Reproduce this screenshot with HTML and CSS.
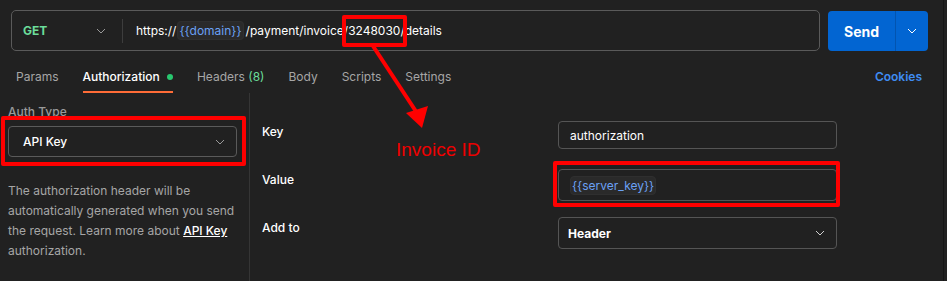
FILE: index.html
```html
<!DOCTYPE html>
<html>
<head>
<meta charset="utf-8">
<link rel="stylesheet" href="styles.css">
</head>
<body>
<div class="page">
  <div class="app">
    <div class="urlbar">
      <div class="urlbox">
        <div class="method">
          <span class="get">GET</span>
          <svg class="chev" width="10" height="6" viewBox="0 0 10 6"><path d="M1 1l4 4 4-4" fill="none" stroke="#9a9a9a" stroke-width="1"/></svg>
        </div>
        <div class="sep"></div>
        <div class="url"><span class="sp">https://</span><span class="var">{{domain}}</span><span class="sp2">/payment/invoice/3248030/details</span></div>
      </div>
      <div class="send">
        <span class="send-main">Send</span>
        <span class="send-drop"><svg width="10" height="6" viewBox="0 0 10 6"><path d="M1 1l4 4 4-4" fill="none" stroke="#ffffff" stroke-width="1"/></svg></span>
      </div>
    </div>
    <div class="tabs">
      <span class="tab">Params</span>
      <span class="tab active">Authorization <i class="dot"></i></span>
      <span class="tab">Headers <span class="count">(8)</span></span>
      <span class="tab">Body</span>
      <span class="tab">Scripts</span>
      <span class="tab">Settings</span>
      <span class="cookies">Cookies</span>
    </div>
    <div class="content">
      <div class="left">
        <div class="label">Auth Type</div>
        <div class="select">
          <span>API Key</span>
          <svg width="10" height="6" viewBox="0 0 10 6"><path d="M1 1l4 4 4-4" fill="none" stroke="#9a9a9a" stroke-width="1"/></svg>
        </div>
        <p class="desc">The authorization header will be automatically generated when you send the request. Learn more about <span class="link">API Key</span> authorization.</p>
      </div>
      <div class="right">
        <div class="row">
          <div class="key">Key</div>
          <div class="input short">authorization</div>
        </div>
        <div class="row">
          <div class="key">Value</div>
          <div class="input"><span class="var">{{server_key}}</span></div>
        </div>
        <div class="row">
          <div class="key">Add to</div>
          <div class="input dropdown"><span class="bold">Header</span><svg width="10" height="6" viewBox="0 0 10 6"><path d="M1 1l4 4 4-4" fill="none" stroke="#d0d0d0" stroke-width="1"/></svg></div>
        </div>
      </div>
    </div>
  </div>
  <div class="edge"></div>

  <div class="mark mark-url"></div>
  <div class="mark mark-auth"></div>
  <div class="mark mark-value"></div>
  <svg class="arrow" width="947" height="281" viewBox="0 0 947 281">
    <line x1="373" y1="46" x2="417" y2="113" stroke="#ff0000" stroke-width="4"/>
    <polygon points="406,113 428,106 422,128" fill="#ff0000"/>
  </svg>
  <div class="note">Invoice ID</div>
</div>
</body>
</html>
```

FILE: styles.css
```css
* { box-sizing: border-box; }
html, body { margin: 0; padding: 0; }
body {
  background: #212121;
  font-family: Inter, "Noto Sans", sans-serif;
  font-size: 12px;
  color: #ffffff;
}
.page {
  position: relative;
  width: 947px;
  height: 281px;
  display: flex;
  overflow: hidden;
}
.app {
  width: 943px;
  display: flex;
  flex-direction: column;
}
.edge {
  width: 4px;
  border-left: 1px solid #161616;
}
.urlbar {
  display: flex;
  gap: 8px;
  padding: 10px 15px 0 11px;
  height: 51px;
}
.urlbox {
  flex: 1;
  height: 41px;
  border: 1px solid #5a5a5a;
  border-radius: 5px;
  display: flex;
  align-items: center;
}
.method {
  width: 110px;
  padding: 0 16px 0 11px;
  display: flex;
  align-items: center;
  justify-content: space-between;
}
.get {
  color: #6bdd9a;
  font-weight: 700;
}
.sep {
  width: 1px;
  height: 24px;
  background: #3d3d3d;
}
.url {
  padding-left: 13px;
  white-space: pre;
  color: #ffffff;
  font-size: 12px;
}
.sp { margin-right: 1px; }
.sp2 { margin-left: 2px; }
.var {
  color: #6aa1f4;
  background: #2a2a2a;
  border: 1px solid #2f2f2f;
  border-radius: 4px;
  padding: 1px 1px;
}
.send {
  width: 100px;
  height: 40px;
  margin-top: 1px;
  background: #0265d2;
  border-radius: 4px;
  display: flex;
}
.send-main {
  width: 68px;
  display: flex;
  align-items: center;
  justify-content: center;
  font-weight: 700;
  font-size: 14px;
  border-right: 1px solid #0254b0;
}
.send-drop {
  flex: 1;
  display: flex;
  align-items: center;
  justify-content: center;
}
.tabs {
  height: 42px;
  display: flex;
  align-items: flex-end;
  gap: 24px;
  padding-left: 16px;
  padding-right: 21px;
}
.tab {
  color: #a6a6a6;
  line-height: 18px;
  padding-bottom: 5px;
  border-bottom: 2px solid transparent;
  white-space: nowrap;
}
.tab.active {
  color: #ffffff;
  font-weight: 500;
  border-bottom-color: #ff6c37;
}
.dot {
  display: inline-block;
  width: 6px;
  height: 6px;
  border-radius: 50%;
  background: #28c76f;
  margin-left: 4px;
  vertical-align: 1px;
}
.count { color: #6bdd9a; }
.cookies {
  margin-left: auto;
  color: #3f8cf2;
  font-weight: 600;
  line-height: 18px;
  padding-bottom: 7px;
}
.content {
  flex: 1;
  display: flex;
}
.left {
  width: 250px;
  border-right: 1px solid #353535;
  padding: 11px 12px 0 8px;
}
.label {
  color: #9a9a9a;
  line-height: 16px;
  font-weight: 500;
}
.select {
  margin-top: 6px;
  height: 31px;
  width: 229px;
  border: 1px solid #5a5a5a;
  border-radius: 4px;
  display: flex;
  align-items: center;
  justify-content: space-between;
  padding: 0 11px 0 14px;
  font-weight: 500;
}
.desc {
  margin: 24px 0 0 0;
  color: #a6a6a6;
  line-height: 20px;
}
.link {
  color: #ffffff;
  font-weight: 500;
  text-decoration: underline;
}
.right {
  flex: 1;
  padding: 28px 0 0 12px;
}
.row {
  height: 48px;
  display: grid;
  grid-template-columns: 296px 279px;
  align-items: start;
}
.key {
  padding-top: 2px;
  line-height: 18px;
  font-weight: 500;
}
.input {
  height: 32px;
  border: 1px solid #555555;
  border-radius: 4px;
  display: flex;
  align-items: center;
  padding: 0 11px;
}
.input.short { height: 28px; }
.input.dropdown {
  justify-content: space-between;
  padding: 0 11px 0 9px;
}
.bold { font-weight: 700; }

.mark {
  position: absolute;
  border: 4px solid #ff0000;
  border-radius: 2px;
  pointer-events: none;
}
.mark-url { left: 342px; top: 15px; width: 65px; height: 32px; }
.mark-auth { left: 1px; top: 116px; width: 245px; height: 50px; }
.mark-value { left: 553px; top: 161px; width: 287px; height: 46px; }
.arrow {
  position: absolute;
  left: 0;
  top: 0;
  pointer-events: none;
}
.note {
  position: absolute;
  left: 396px;
  top: 140px;
  font-family: "Liberation Sans", Arial, sans-serif;
  font-size: 19px;
  line-height: 20px;
  color: #ee0000;
}
```
